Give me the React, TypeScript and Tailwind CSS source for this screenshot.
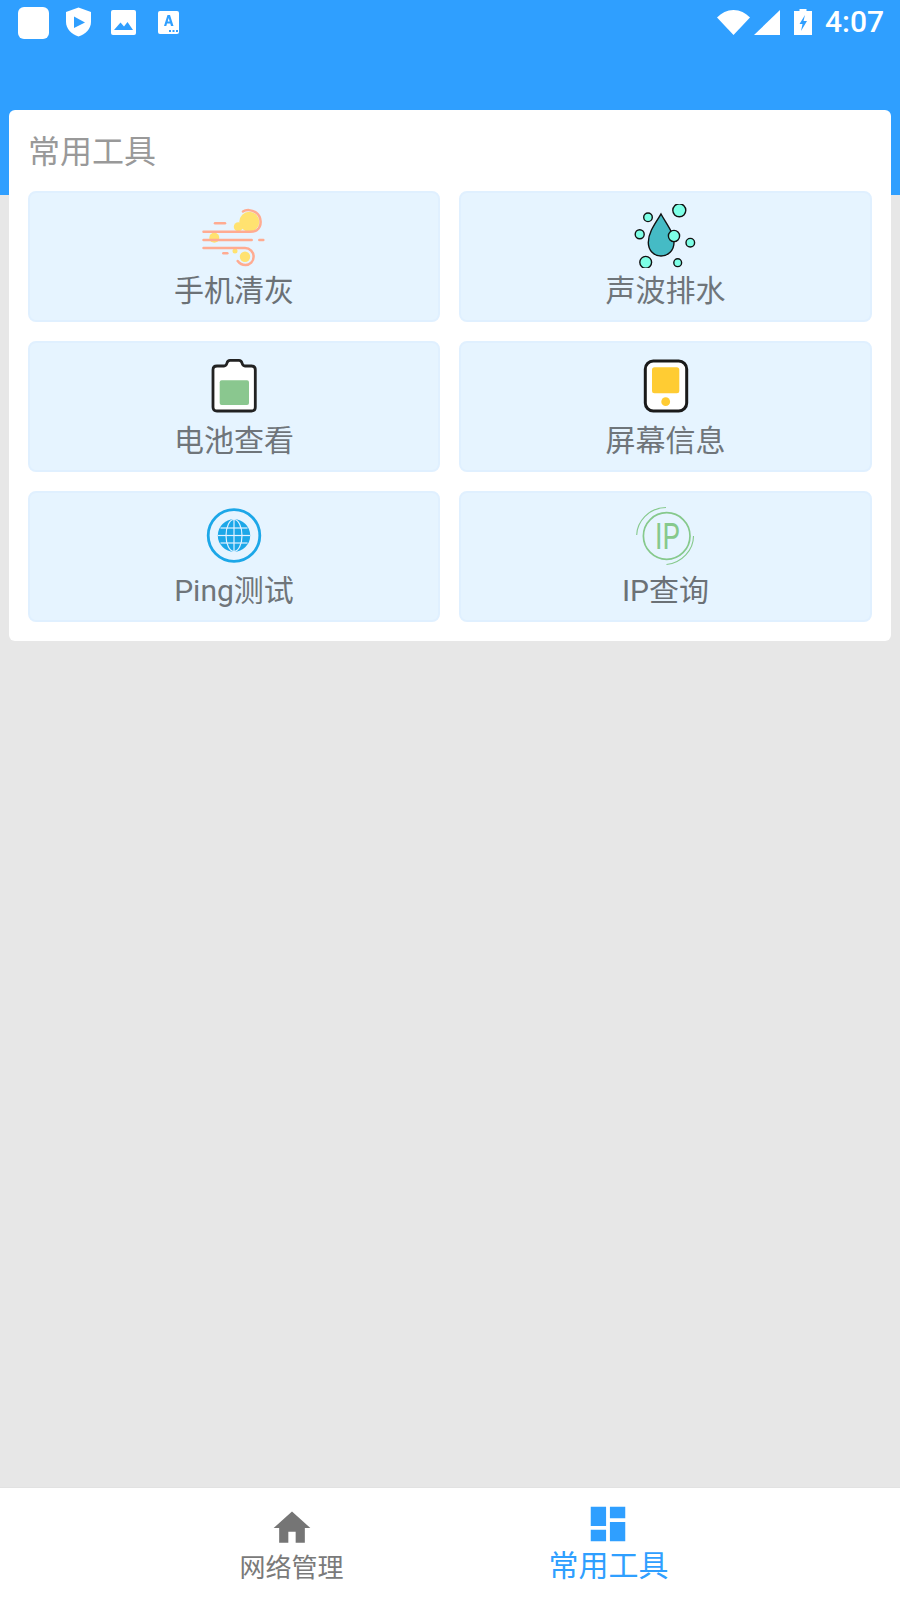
import React from 'react';

const WindIcon = () => (
  <svg width="64" height="64" viewBox="0 0 64 64" fill="none">
    <circle cx="47.3" cy="17.7" r="10" fill="#FFE270" />
    <circle cx="36.3" cy="22.7" r="4.5" fill="#FFE270" />
    <circle cx="12.3" cy="33.7" r="5" fill="#FFE270" />
    <circle cx="43" cy="52.7" r="5.2" fill="#FFE270" />
    <circle cx="33" cy="47" r="2.5" fill="#FFE270" />
    <g stroke="#FFAB91" strokeWidth="2.5" strokeLinecap="round">
      <path d="M41 7.5C44 5.5 50 5.5 54 8.5C60 13 60 22 55 26C53 27.5 51 27.7 48 27.7H1.5" />
      <path d="M13 19.3H23" />
      <path d="M1.5 36H49.7" />
      <path d="M57.3 36H61.3" />
      <path d="M1.5 44H43C48 44 51.6 48 51.6 52.7C51.6 57.5 48 61 43.5 61C40 61 37.5 59.5 35.7 57" />
      <path d="M21.3 49.3H25.3" />
    </g>
  </svg>
);

const DropIcon = () => (
  <svg width="64" height="64" viewBox="4 0 64 64" stroke="#111" strokeWidth="1.4">
    <path d="M31 10C24 21 18.3 29 18.3 38.5C18.3 46.5 24 52 31 52C38 52 44 46.5 44 38.5C44 29 37 21 31 10Z" fill="#45BBC5" />
    <g fill="#7DFFE6">
      <circle cx="49.3" cy="6.3" r="6.5" />
      <circle cx="18" cy="13.3" r="4.3" />
      <circle cx="9.7" cy="30.3" r="4.5" />
      <circle cx="44" cy="32" r="5.6" />
      <circle cx="60.3" cy="38.7" r="4.3" />
      <circle cx="15.7" cy="58.3" r="5.9" />
      <circle cx="47.7" cy="58.7" r="3.9" />
    </g>
  </svg>
);

const BatteryIcon = () => (
  <svg width="64" height="64" viewBox="0 0 64 64">
    <path
      d="M15 12H22C24 12 24.5 11 25 9C25.5 7 26.5 6.3 28 6.3H37C38.5 6.3 39.5 7 40 9C40.5 11 41 12 43 12H49.5C52 12 53.3 13.3 53.3 15.8V53C53.3 55.7 52 57 49.5 57H15C12.3 57 11 55.7 11 53V15.8C11 13.3 12.3 12 15 12Z"
      fill="#fff"
      stroke="#222"
      strokeWidth="2.8"
    />
    <rect x="17.7" y="26.3" width="29.3" height="24.7" rx="2" fill="#8AC78F" />
  </svg>
);

const ScreenIcon = () => (
  <svg width="64" height="64" viewBox="4 0 64 64">
    <rect x="15.3" y="7" width="41.4" height="50" rx="8" fill="#fff" stroke="#1a1a1a" strokeWidth="3" />
    <rect x="22" y="13.3" width="27.3" height="26" rx="2.5" fill="#FFCC33" />
    <circle cx="35.7" cy="47.7" r="4.4" fill="#FFCC33" />
  </svg>
);

const GlobeIcon = () => (
  <svg width="64" height="64" viewBox="0 0 64 64" fill="none">
    <circle cx="32" cy="31.5" r="25.8" stroke="#1CA7E8" strokeWidth="2.8" />
    <circle cx="32" cy="31.5" r="16.2" fill="#1CA7E8" />
    <g stroke="#E3F2FF" strokeWidth="1.2">
      <path d="M32 15.5V47.5" />
      <path d="M16 31.5H48" />
      <path d="M18.5 24H45.5" />
      <path d="M18.5 39H45.5" />
      <ellipse cx="32" cy="31.5" rx="8" ry="16" />
    </g>
  </svg>
);

const IpIcon = () => (
  <svg width="64" height="64" viewBox="4 0 64 64" fill="none">
    <circle cx="36.7" cy="32" r="23.3" stroke="#86C98C" strokeWidth="1.7" />
    <path d="M6.7 31C7 18 18 4 36 3.5" stroke="#86C98C" strokeWidth="1.1" />
    <path d="M63.5 32C63.5 46 52 59 36.5 60.5" stroke="#86C98C" strokeWidth="1.1" />
    <text
      transform="translate(25 45.3) scale(0.74 1)"
      fontSize="37"
      fill="#86C98C"
      className="font-['Roboto'] font-normal"
    >
      IP
    </text>
  </svg>
);

const tools = [
  { label: '手机清灰', icon: <WindIcon />, color: 'text-[#6b7176]' },
  { label: '声波排水', icon: <DropIcon />, color: 'text-[#6f757a]' },
  { label: '电池查看', icon: <BatteryIcon />, color: 'text-[#6f757a]' },
  { label: '屏幕信息', icon: <ScreenIcon />, color: 'text-[#6f757a]' },
  { label: 'Ping测试', icon: <GlobeIcon />, color: 'text-[#6f757a]' },
  { label: 'IP查询', icon: <IpIcon />, color: 'text-[#6b7176]' },
];

const StatusBar = () => (
  <div className="flex h-[44px] items-center pl-[18px] pr-[16px] text-white">
    <div className="mt-[2px] h-[32px] w-[31px] rounded-[6px] bg-white" />
    <svg className="ml-[17px]" width="25" height="30" viewBox="0 0 25 30">
      <path d="M12.5 0.5L25 5V15C25 22 19.5 27 12.5 29.5C5.5 27 0 22 0 15V5Z" fill="#fff" />
      <path d="M8 9.5L19 15.5L8 21Z" fill="#2F9FFF" />
    </svg>
    <svg className="ml-[20px]" width="25" height="25" viewBox="0 0 25 25">
      <rect width="25" height="25" rx="2" fill="#fff" />
      <path d="M3 20L9.5 12.5L13 16.5L16.5 12L22 20Z" fill="#2F9FFF" />
    </svg>
    <svg className="ml-[22px]" width="21" height="23" viewBox="0 0 21 23">
      <rect width="21" height="23" rx="2" fill="#fff" />
      <path d="M6 15L9.5 4H12L15.5 15H13L12.3 12.5H9L8.3 15ZM9.7 10.5H11.7L10.7 7Z" fill="#2F9FFF" />
      <path d="M11 19H13V21H11ZM14.5 19H16.5V21H14.5ZM18 19H20V21H18Z" fill="#2F9FFF" />
    </svg>
    <div className="flex-1" />
    <svg width="33" height="25" viewBox="0 0 33 25">
      <path d="M0 7.5C4.5 3 10 0 16.5 0C23 0 28.5 3 33 7.5L16.5 25Z" fill="#fff" />
    </svg>
    <svg className="ml-[4px]" width="26" height="25" viewBox="0 0 26 25">
      <path d="M26 0V25H0Z" fill="#fff" />
    </svg>
    <svg className="ml-[14px]" width="18" height="26" viewBox="0 0 18 26">
      <path d="M5.5 0H12.5V2H18V26H0V2H5.5Z" fill="#fff" />
      <path d="M11 6L5.5 15H8.5L7 22L13 12H9.5Z" fill="#2F9FFF" />
    </svg>
    <span className="ml-[13px] font-['Roboto'] text-[30px] leading-none font-medium">4:07</span>
  </div>
);

const App = () => {
  return (
    <div className="flex h-[1600px] w-[900px] flex-col bg-[#e7e7e7] font-['Roboto','Noto_Sans_CJK_SC',sans-serif]">
      <div className="h-[195px] shrink-0 bg-[#2f9fff]">
        <StatusBar />
      </div>

      <div className="flex-1">
        {/* Tools card overlaps the blue header */}
        <div className="mx-[9px] -mt-[85px] rounded-[6px] bg-white px-[19px] pb-[19px]">
          <div className="flex h-[81px] items-center pt-[2px] text-[32px] leading-none text-[#999999]">常用工具</div>
          <div className="grid grid-cols-[412px_413px] gap-[19px]">
            {tools.map((tool) => (
              <div
                key={tool.label}
                className="flex h-[131px] flex-col items-center rounded-[8px] border-2 border-[#e0f0ff] bg-[#e6f4ff]"
              >
                <div className="mt-[11px] h-[64px] w-[64px] shrink-0">{tool.icon}</div>
                <div className={`mt-[4px] text-[30px] leading-[38px] ${tool.color}`}>{tool.label}</div>
              </div>
            ))}
          </div>
        </div>
      </div>

      {/* Bottom navigation */}
      <div className="flex h-[113px] shrink-0 justify-center border-t border-[#e2e2e2] bg-white">
        <div className="flex w-[317px] flex-col items-center pt-[22px]">
          <svg width="44" height="44" viewBox="0 0 24 24" fill="#757575" className="-my-[4px]">
            <path d="M10 20v-6h4v6h5v-8h3L12 3 2 12h3v8z" />
          </svg>
          <span className="mt-[4px] text-[26px] leading-[36px] text-[#7a7a7a]">网络管理</span>
        </div>
        <div className="flex w-[317px] flex-col items-center pt-[14px]">
          <svg width="46" height="46" viewBox="0 0 24 24" fill="#2f9fff" className="-my-[1px] -ml-[2px]">
            <path d="M3 13h8V3H3v10zm0 8h8v-6H3v6zm10 0h8V11h-8v10zm0-18v6h8V3h-8z" />
          </svg>
          <span className="text-[30px] leading-[40px] text-[#2f9fff]">常用工具</span>
        </div>
      </div>
    </div>
  );
};

export default App;
